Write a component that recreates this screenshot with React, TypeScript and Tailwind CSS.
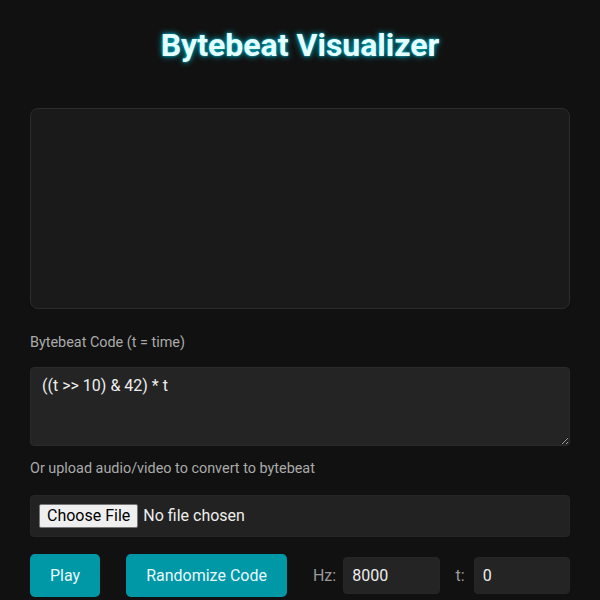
import { useState } from 'react'

export default function App() {
  const [code, setCode] = useState('((t >> 10) & 42) * t')
  const [hz, setHz] = useState('8000')
  const [t, setT] = useState('0')

  return (
    <div className="min-h-[600px] bg-[#111111] px-[30px] pt-[26px] font-['Roboto',sans-serif] text-[#e0e0e0]">
      <h1 className="text-center text-[32px] leading-[38px] font-bold text-[#e6ffff] [text-shadow:0_0_6px_#00bcd4,0_0_2px_#00bcd4]">
        Bytebeat Visualizer
      </h1>

      {/* Visualizer canvas */}
      <div className="mt-[44px] h-[201px] rounded-lg border border-[#2c2c2c] bg-[#1a1a1a]" />

      <label className="mt-[24px] block text-[14.4px] leading-5 text-[#aaaaaa]">Bytebeat Code (t = time)</label>
      <textarea
        value={code}
        onChange={(e) => setCode(e.target.value)}
        className="mt-[14px] block h-[79px] w-full rounded border border-[#2a2a2a] bg-[#242424] px-[11px] py-[8px] text-base leading-[19px] text-[#eeeeee] outline-none"
      />

      <p className="mt-[13px] text-[14.4px] leading-5 text-[#aaaaaa]">Or upload audio/video to convert to bytebeat</p>
      <div className="mt-[16px] rounded border border-[#262626] bg-[#222222] px-[8px] py-[8px]">
        <input
          type="file"
          accept="audio/*,video/*"
          className="block h-[24px] w-full text-base leading-[18px] text-[#eeeeee] file:mr-[5px] file:h-[24px] file:rounded-[2px] file:border file:border-[#767676] file:bg-[#efefef] file:px-[7px] file:text-base file:leading-[18px] file:text-black"
        />
      </div>

      <div className="mt-[17px] flex items-center">
        <button className="h-[43px] rounded-[5px] bg-[#0097a7] px-5 text-base text-[#e8f8fa]">Play</button>
        <button className="ml-[26px] h-[43px] rounded-[5px] bg-[#0097a7] px-5 text-base text-[#e8f8fa]">Randomize Code</button>
        <span className="ml-[26px] text-base text-[#9a9a9a]">Hz:</span>
        <input
          value={hz}
          onChange={(e) => setHz(e.target.value)}
          className="ml-[7px] h-[37px] min-w-0 flex-1 rounded border border-[#262626] bg-[#242424] px-2 text-base text-[#eeeeee] outline-none"
        />
        <span className="ml-4 text-base text-[#9a9a9a]">t:</span>
        <input
          value={t}
          onChange={(e) => setT(e.target.value)}
          className="ml-[9px] h-[37px] min-w-0 flex-1 rounded border border-[#262626] bg-[#242424] px-2 text-base text-[#eeeeee] outline-none"
        />
      </div>
    </div>
  )
}
